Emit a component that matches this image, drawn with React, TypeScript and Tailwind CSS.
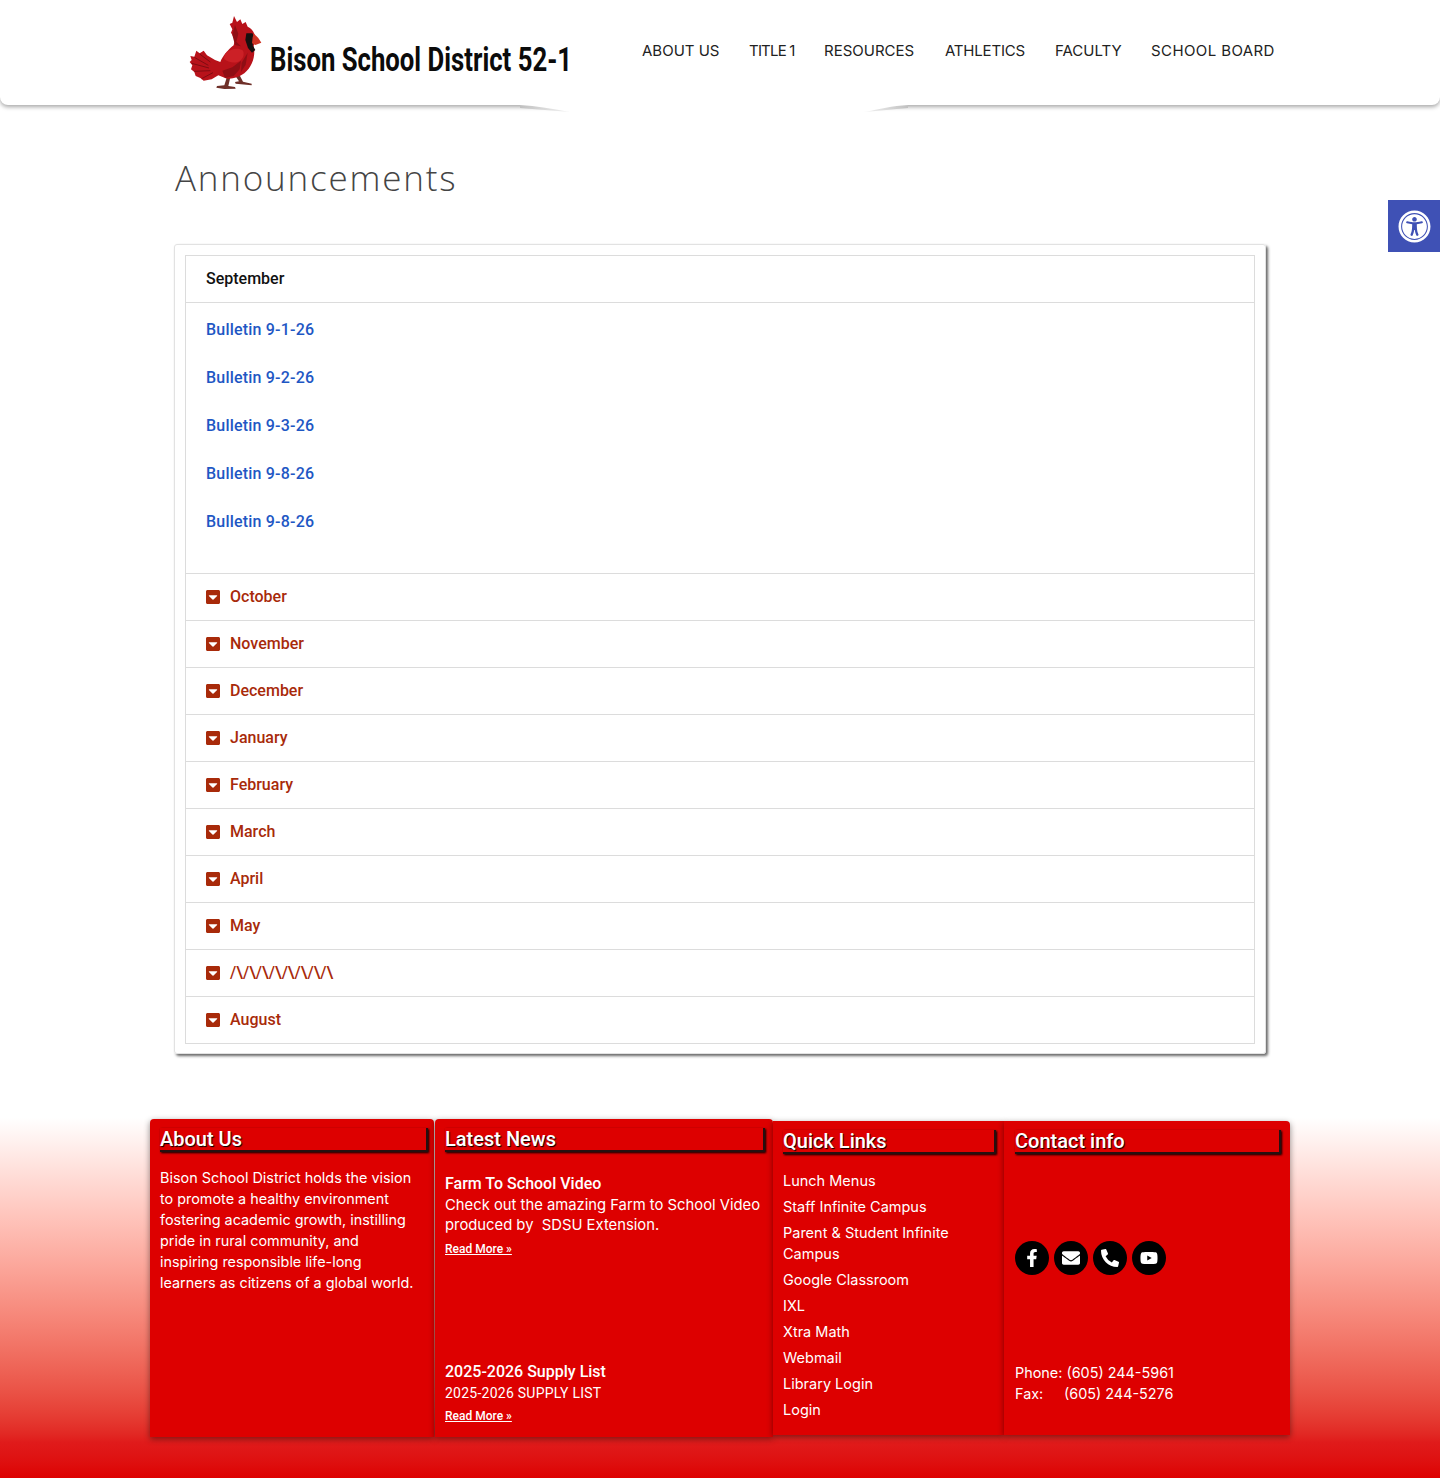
import React from "react";
import { FaCaretSquareDown, FaFacebookF, FaEnvelope, FaPhoneAlt, FaYoutube, FaUniversalAccess } from "react-icons/fa";

const nav = [
  { t: "ABOUT US", c: "w-[77px]" },
  { t: "TITLE 1", c: "w-[45px] tracking-[-0.8px]" },
  { t: "RESOURCES", c: "w-[91px]" },
  { t: "ATHLETICS", c: "w-[80px] tracking-[-0.2px]" },
  { t: "FACULTY", c: "w-[66px]" },
  { t: "SCHOOL BOARD", c: "w-[124px] tracking-[0.4px]" },
];
const bulletins = ["Bulletin 9-1-26", "Bulletin 9-2-26", "Bulletin 9-3-26", "Bulletin 9-8-26", "Bulletin 9-8-26"];
const months = ["October", "November", "December", "January", "February", "March", "April", "May", "/\\/\\/\\/\\/\\/\\/\\/\\", "August"];
const links = ["Lunch Menus", "Staff Infinite Campus", "Parent & Student Infinite Campus", "Google Classroom", "IXL", "Xtra Math", "Webmail", "Library Login", "Login"];
const farmText = "Check out the amazing Farm to School Video produced by\u00a0\u00a0SDSU Extension.";

function Bird() {
  return (
    <svg viewBox="0 0 255 255" className="w-[85px] h-[85px] shrink-0" aria-hidden="true">
      <path d="M126 200L118 226L96 228L94 233L118 237L152 236L150 231L130 228L136 202ZM150 196L162 214L150 216L152 221L200 226L200 221L174 215L162 192Z" fill="#6e2f28" />
      <path d="M147 18L156 36L166 28L172 42L182 36L188 50C198 54 205 62 208 72L212 90L206 108L208 122C208 150 198 172 178 190C162 202 142 208 126 206L100 196L80 208L56 212L46 204L32 198L28 186L18 178L22 166L14 156L20 150L16 138L28 140L34 122L44 130L56 122L66 136L90 150L106 156C112 140 128 120 146 106L150 88L138 68L142 58L134 42L142 38Z" fill="#b8121a" />
      <path d="M28 142L70 166M20 160L72 174M28 184L76 182M50 206L84 188M44 132L76 156" stroke="#7f0c11" strokeWidth="3" fill="none" />
      <path d="M112 182L142 172L168 152L164 178L146 198L120 204Z" fill="#8f0e14" />
      <path d="M122 130C136 116 160 112 174 122C180 136 172 150 158 156C144 160 128 156 118 148C116 142 118 136 122 130Z" fill="#cc2026" />
      <path d="M150 45L160 71L154 95L168 109L150 105L142 75ZM170 158L188 128L182 164L168 186Z" fill="#8f0e14" />
      <path d="M184 70L202 70L208 80L203 106L211 120L201 128L189 114L181 90Z" fill="#17100f" />
      <path d="M206 70L220 84L229 98L211 105L201 100L203 82Z" fill="#cf3425" />
    </svg>
  );
}

function Heading({ title }: { title: string }) {
  return (
    <h3 className="h-[24px] border-b-2 border-r-2 border-[#241010] shadow-[1px_1px_2px_#000] font-['Roboto',sans-serif] text-[20px] leading-[22px] font-medium text-white [text-shadow:1px_1px_1px_#000]">
      {title}
    </h3>
  );
}

function ReadMore() {
  return <a className="block font-['Roboto',sans-serif] text-[12px] leading-[16px] font-medium text-white underline">Read More »</a>;
}

const body = "font-['Inter',sans-serif] font-normal text-white";

export default function App() {
  return (
    <div className="relative w-full min-h-[1478px] bg-white overflow-hidden">
      <header className="relative h-[105px] bg-white rounded-b-lg shadow-[0_2px_4px_rgba(0,0,0,0.35)] flex items-start">
        <div className="ml-[185px] mt-[10px] flex items-start">
          <Bird />
          <span className="block w-[300px] mt-[30px] origin-left scale-x-[0.779] whitespace-nowrap font-['Roboto',sans-serif] font-bold text-[33px] leading-[40px] text-[#0b0b0b]">
            Bison School District 52-1
          </span>
        </div>
        <nav className="ml-[72px] mt-[40px] flex gap-[30px] font-['Inter',sans-serif] text-[15px] leading-[22px] text-[#222] whitespace-nowrap">
          {nav.map((n) => (
            <a key={n.t} className={n.c}>{n.t}</a>
          ))}
        </nav>
        <svg viewBox="0 0 388 10" className="absolute left-[520px] top-[103px] w-[388px] h-[10px]" aria-hidden="true">
          <defs>
            <linearGradient id="wl" x1="0" x2="1" y1="0" y2="0">
              <stop offset="0" stopColor="#c0c0c0" />
              <stop offset="1" stopColor="#f4f4f4" />
            </linearGradient>
            <linearGradient id="wr" x1="1" x2="0" y1="0" y2="0">
              <stop offset="0" stopColor="#c0c0c0" />
              <stop offset="1" stopColor="#f4f4f4" />
            </linearGradient>
          </defs>
          <path d="M0 0H388V3C372 4 360 7 344 9H50C34 7 16 4 0 3Z" fill="#fff" />
          <path d="M0 2C16 3 34 6 50 9C34 8 16 6 0 5Z" fill="url(#wl)" />
          <path d="M388 2C372 3 360 6 344 9C360 8 372 6 388 5Z" fill="url(#wr)" />
        </svg>
      </header>

      <div className="absolute right-0 top-[200px] w-[52px] h-[52px] bg-[#3f51b5] flex items-center justify-center">
        <FaUniversalAccess className="text-white w-[33px] h-[33px]" />
      </div>

      <main>
        <h1 className="ml-[175px] mt-[52px] font-['Open_Sans',sans-serif] font-[350] text-[35px] leading-[42px] tracking-[1.8px] text-[#444]">
          Announcements
        </h1>
        <section className="mt-[45px] ml-[174px] w-[1092px] border border-[#e2e2e2] rounded-[3px] pt-[10px] px-[10px] pb-[9px] shadow-[2px_2px_3px_#666] font-['Roboto',sans-serif] text-[16px] font-medium">
          <div className="border border-[#dcdcdc]">
            <div className="h-[47px] px-5 flex items-center text-[#111] border-b border-[#dcdcdc]">September</div>
            <div className="px-5 pt-[15px] pb-[15px] text-[#1e57c4] leading-6 tracking-[0.2px]">
              {bulletins.map((b, i) => (
                <a key={i} className="block mb-6">{b}</a>
              ))}
            </div>
            {months.map((m) => (
              <div key={m} className="h-[47px] px-5 flex items-center gap-[10px] border-t border-[#dcdcdc] text-[#a82a0a]">
                <FaCaretSquareDown className="w-[14px] h-4" />
                <span>{m}</span>
              </div>
            ))}
          </div>
        </section>
      </main>

      <footer className="mt-[56px] h-[369px] pt-[9px] bg-gradient-to-b from-white from-[2%] via-[#e01b1b] via-[90%] to-[#dd0000] flex justify-start pl-[150px]">
        <div className="w-[284px] h-[318px] bg-[#dd0000] rounded-t-[4px] shadow-[0_2px_6px_rgba(0,0,0,0.45)] pl-[10px] pr-[6px] pt-[9px]">
          <Heading title="About Us" />
          <p className={`${body} w-[258px] text-[14.4px] mt-[15px] leading-[21px]`}>
            Bison School District holds the vision to promote a healthy environment fostering academic growth, instilling pride in rural community, and inspiring responsible life-long learners as citizens of a global world.
          </p>
        </div>
        <div className="w-[338px] h-[318px] ml-px bg-[#dd0000] rounded-t-[4px] shadow-[0_2px_6px_rgba(0,0,0,0.45)] pl-[10px] pr-2 pt-[9px]">
          <Heading title="Latest News" />
          <h4 className="mt-[21px] font-['Roboto',sans-serif] text-[16px] leading-[22px] font-medium text-white">Farm To School Video</h4>
          <p className={`${body} text-[14.8px] leading-[20px]`}>{farmText}</p>
          <div className="mt-[6px]"><ReadMore /></div>
          <h4 className="mt-[104px] font-['Roboto',sans-serif] text-[16px] leading-[22px] font-medium text-white">2025-2026 Supply List</h4>
          <p className="font-['Roboto',sans-serif] text-white leading-[20px] text-[14px] tracking-[0.25px]">2025-2026 SUPPLY LIST</p>
          <div className="mt-[5px]"><ReadMore /></div>
        </div>
        <div className="w-[231px] h-[314px] mt-[2px] bg-[#dd0000] shadow-[0_2px_6px_rgba(0,0,0,0.45)] pl-[10px] pr-[8px] pt-[9px]">
          <Heading title="Quick Links" />
          <ul className={`${body} text-[14.5px] mt-[16px] leading-[21px] flex flex-col gap-[5px]`}>
            {links.map((l) => (
              <li key={l}>{l}</li>
            ))}
          </ul>
        </div>
        <div className="w-[286px] h-[314px] mt-[2px] bg-[#dd0000] rounded-tr-[4px] shadow-[0_2px_6px_rgba(0,0,0,0.45)] pl-[11px] pr-[9px] pt-[9px]">
          <Heading title="Contact info" />
          <div className="mt-[87px] flex gap-[5px]">
            {[FaFacebookF, FaEnvelope, FaPhoneAlt, FaYoutube].map((Icon, i) => (
              <span key={i} className="w-[34px] h-[34px] rounded-full bg-black flex items-center justify-center text-white">
                <Icon className="w-[18px] h-[18px]" />
              </span>
            ))}
          </div>
          <p className={`${body} text-[14.4px] mt-[87px] leading-[21px]`}>Phone: (605) 244-5961</p>
          <p className={`${body} text-[14.4px] leading-[21px] flex`}><span className="w-[49px]">Fax:</span>(605) 244-5276</p>
        </div>
      </footer>
    </div>
  );
}
